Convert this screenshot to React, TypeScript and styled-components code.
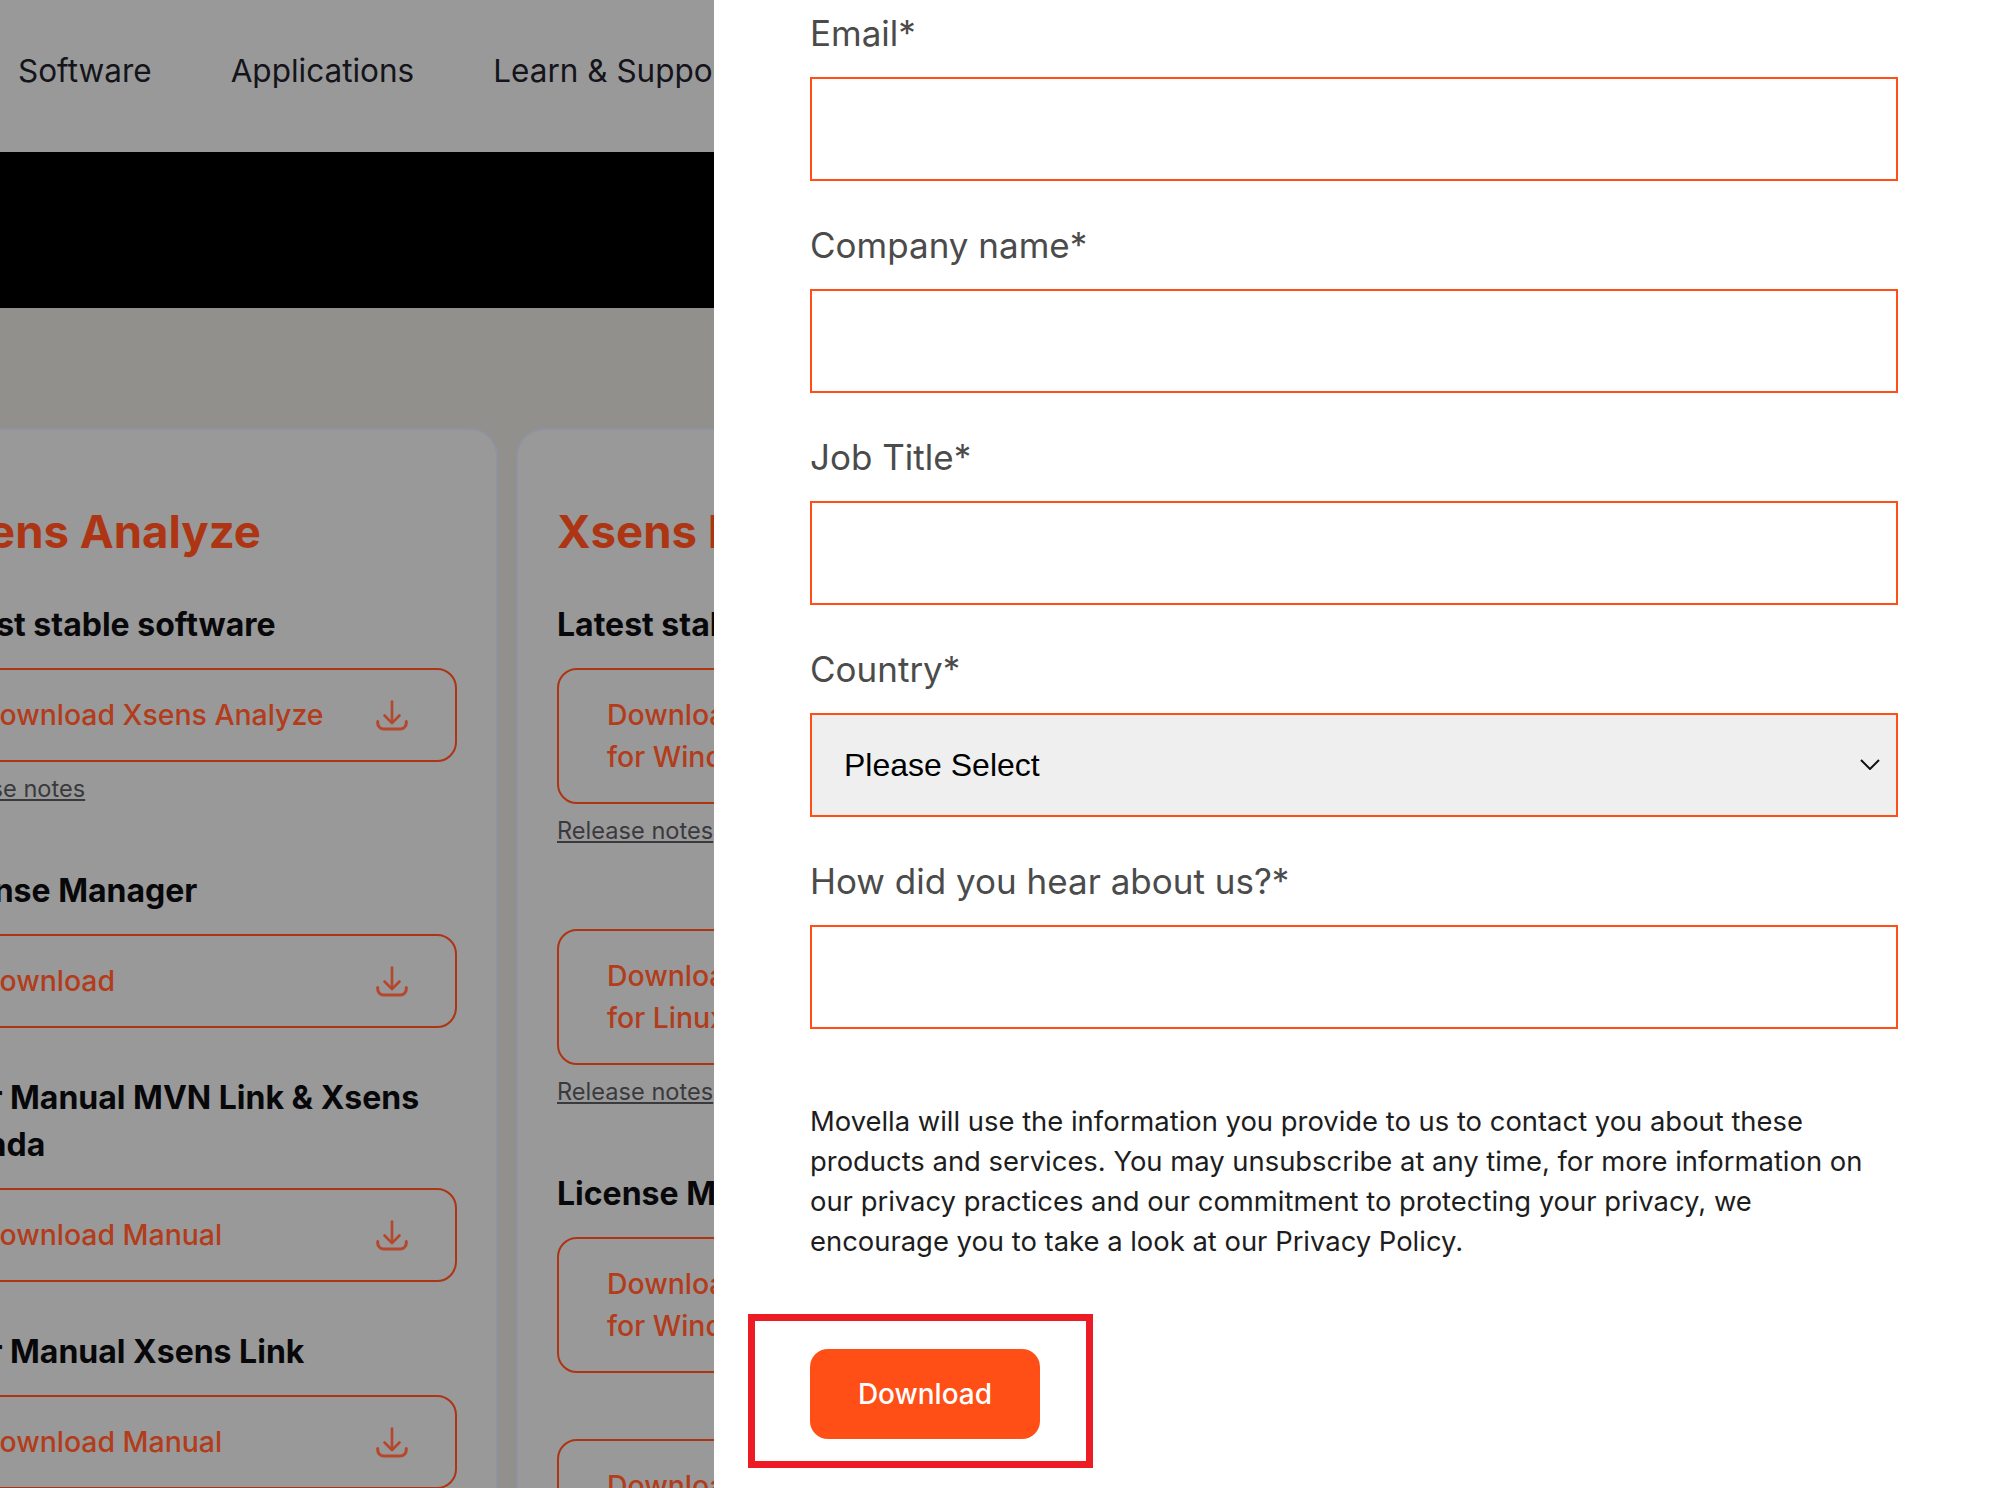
import styled, { createGlobalStyle } from "styled-components";

const GlobalStyle = createGlobalStyle`
  html, body {
    margin: 0;
    padding: 0;
    height: 1488px;
    overflow: hidden;
    background: #fff;
  }
  * {
    box-sizing: border-box;
  }
`;

const fontStack = `"Inter", "Noto Sans", sans-serif`;

const Page = styled.div`
  display: flex;
  height: 1488px;
  overflow: hidden;
  font-family: ${fontStack};
`;

/* dimmed page behind the drawer */
const Backdrop = styled.div`
  width: 714px;
  flex: none;
  overflow: hidden;
  background: #999;
`;

const Nav = styled.nav`
  height: 152px;
  display: flex;
  align-items: center;
  gap: 79px;
  padding: 0 0 12px 18px;
  white-space: nowrap;
`;

const NavItem = styled.a`
  font-size: 31.5px;
  color: #14141a;
`;

const Hero = styled.div`
  height: 156px;
  background: #000;
`;

const Downloads = styled.section`
  height: 1180px;
  padding-top: 120px;
  background: #91908d;
`;

const Cards = styled.div`
  display: flex;
  gap: 18px;
  margin-left: -112px;
  height: 100%;
`;

const Card = styled.div`
  width: 610px;
  flex: none;
  padding: 72px 39px 0;
  background: #999;
  border: 2px solid #90939f;
  border-bottom: 0;
  border-radius: 28px 28px 0 0;
`;

const CardTitle = styled.h2`
  margin: 0 0 39px;
  font-size: 45.5px;
  line-height: 60px;
  font-weight: 700;
  color: #ad3513;
  white-space: nowrap;
`;

const Block = styled.div<{ $after?: number }>`
  display: flow-root;
  margin-bottom: ${(p) => p.$after ?? 46}px;
`;

const BlockTitle = styled.h3`
  margin: 0 0 20px;
  font-size: 32px;
  line-height: 47px;
  font-weight: 700;
  color: #08080a;
  white-space: nowrap;
`;

const DownloadButton = styled.a`
  display: flex;
  align-items: center;
  justify-content: space-between;
  padding: 24px 47px 24px 48px;
  border: 2px solid #ad3513;
  border-radius: 20px;
  font-size: 28.4px;
  line-height: 42px;
  font-weight: 500;
  color: #b23c1b;
`;

const ReleaseNotes = styled.a`
  display: block;
  margin: 9px 0 14px;
  font-size: 23.6px;
  line-height: 36px;
  color: #3a3a3e;
  text-decoration: underline;
`;

const Drawer = styled.aside`
  flex: 1;
  min-width: 0;
  padding: 13px 94px 0 96px;
  background: #fff;
`;

const Field = styled.div`
  margin-bottom: 44px;
`;

const Label = styled.label`
  display: block;
  margin-bottom: 24px;
  font-size: 35px;
  line-height: 40px;
  color: #4b4b4b;
`;

const TextInput = styled.input`
  display: block;
  width: 100%;
  height: 104px;
  border: 2px solid #ff4f17;
  border-radius: 0;
  background: #fff;
  outline: none;
`;

const SelectWrap = styled.div`
  position: relative;
`;

const Select = styled.select`
  display: block;
  width: 100%;
  height: 104px;
  padding: 0 32px;
  appearance: none;
  border: 2px solid #ff4f17;
  border-radius: 0;
  background: #efefef;
  font-family: "Liberation Sans", Arial, sans-serif;
  font-size: 32px;
  color: #000;
  outline: none;
`;

const Chevron = styled.svg`
  position: absolute;
  right: 18px;
  top: 46px;
  width: 20px;
  height: 11px;
`;

const Notice = styled.p`
  margin: 72px 0 88px;
  font-size: 27.4px;
  line-height: 40px;
  color: #1d1d1d;
`;

const SubmitWrap = styled.div`
  position: relative;
  width: 230px;
`;

const SubmitButton = styled.button`
  display: block;
  width: 230px;
  height: 90px;
  border: 0;
  border-radius: 18px;
  background: #ff4f17;
  font-family: ${fontStack};
  font-size: 28px;
  font-weight: 500;
  color: #fff;
`;

/* red annotation frame drawn on the screenshot */
const Highlight = styled.div`
  position: absolute;
  left: -62px;
  top: -35px;
  width: 345px;
  height: 154px;
  border: 7px solid #ed1c24;
  pointer-events: none;
`;

const IconSvg = styled.svg`
  flex: none;
  width: 32px;
  height: 31px;
`;

function DownloadIcon() {
  return (
    <IconSvg viewBox="0 0 32 31" fill="none" stroke="#b5482c" strokeWidth="2.6" strokeLinecap="round" strokeLinejoin="round">
      <path d="M16 1.5v21" />
      <path d="M8.5 15.5l7.5 7.5 7.5-7.5" />
      <path d="M1.7 21.5v1.5a6 6 0 0 0 6 6h16.6a6 6 0 0 0 6-6v-1.5" strokeWidth="3" />
    </IconSvg>
  );
}

function Download({ children }: { children: React.ReactNode }) {
  return (
    <DownloadButton>
      <span>{children}</span>
      <DownloadIcon />
    </DownloadButton>
  );
}

const fields = ["Email*", "Company name*", "Job Title*"];

export default function App() {
  return (
    <Page>
      <GlobalStyle />
      <Backdrop>
        <Nav>
          <NavItem>Software</NavItem>
          <NavItem>Applications</NavItem>
          <NavItem>Learn &amp; Support</NavItem>
        </Nav>
        <Hero />
        <Downloads>
          <Cards>
            <Card>
              <CardTitle>Xsens Analyze</CardTitle>
              <Block>
                <BlockTitle>Latest stable software</BlockTitle>
                <Download>Download Xsens Analyze</Download>
                <ReleaseNotes>Release notes</ReleaseNotes>
              </Block>
              <Block>
                <BlockTitle>License Manager</BlockTitle>
                <Download>Download</Download>
              </Block>
              <Block>
                <BlockTitle>
                  User Manual MVN Link &amp; Xsens
                  <br />
                  Awinda
                </BlockTitle>
                <Download>Download Manual</Download>
              </Block>
              <Block>
                <BlockTitle>User Manual Xsens Link</BlockTitle>
                <Download>Download Manual</Download>
              </Block>
            </Card>
            <Card>
              <CardTitle>Xsens Link</CardTitle>
              <Block $after={66}>
                <BlockTitle>Latest stable software</BlockTitle>
                <Download>
                  Download Xsens Link
                  <br />
                  for Windows
                </Download>
                <ReleaseNotes>Release notes</ReleaseNotes>
              </Block>
              <Block>
                <Download>
                  Download Xsens Link
                  <br />
                  for Linux
                </Download>
                <ReleaseNotes>Release notes</ReleaseNotes>
              </Block>
              <Block $after={66}>
                <BlockTitle>License Manager</BlockTitle>
                <Download>
                  Download License
                  <br />
                  for Windows
                </Download>
              </Block>
              <Block>
                <Download>
                  Download License
                  <br />
                  for Linux
                </Download>
              </Block>
            </Card>
          </Cards>
        </Downloads>
      </Backdrop>
      <Drawer>
        {fields.map((name) => (
          <Field key={name}>
            <Label>{name}</Label>
            <TextInput type="text" />
          </Field>
        ))}
        <Field>
          <Label>Country*</Label>
          <SelectWrap>
            <Select defaultValue="">
              <option value="">Please Select</option>
            </Select>
            <Chevron viewBox="0 0 20 11" fill="none" stroke="#111" strokeWidth="2">
              <path d="M1 1l9 9 9-9" />
            </Chevron>
          </SelectWrap>
        </Field>
        <Field>
          <Label>How did you hear about us?*</Label>
          <TextInput type="text" />
        </Field>
        <Notice>
          Movella will use the information you provide to us to contact you about these products and services. You may
          unsubscribe at any time, for more information on our privacy practices and our commitment to protecting your
          privacy, we encourage you to take a look at our Privacy Policy.
        </Notice>
        <SubmitWrap>
          <SubmitButton>Download</SubmitButton>
          <Highlight />
        </SubmitWrap>
      </Drawer>
    </Page>
  );
}
